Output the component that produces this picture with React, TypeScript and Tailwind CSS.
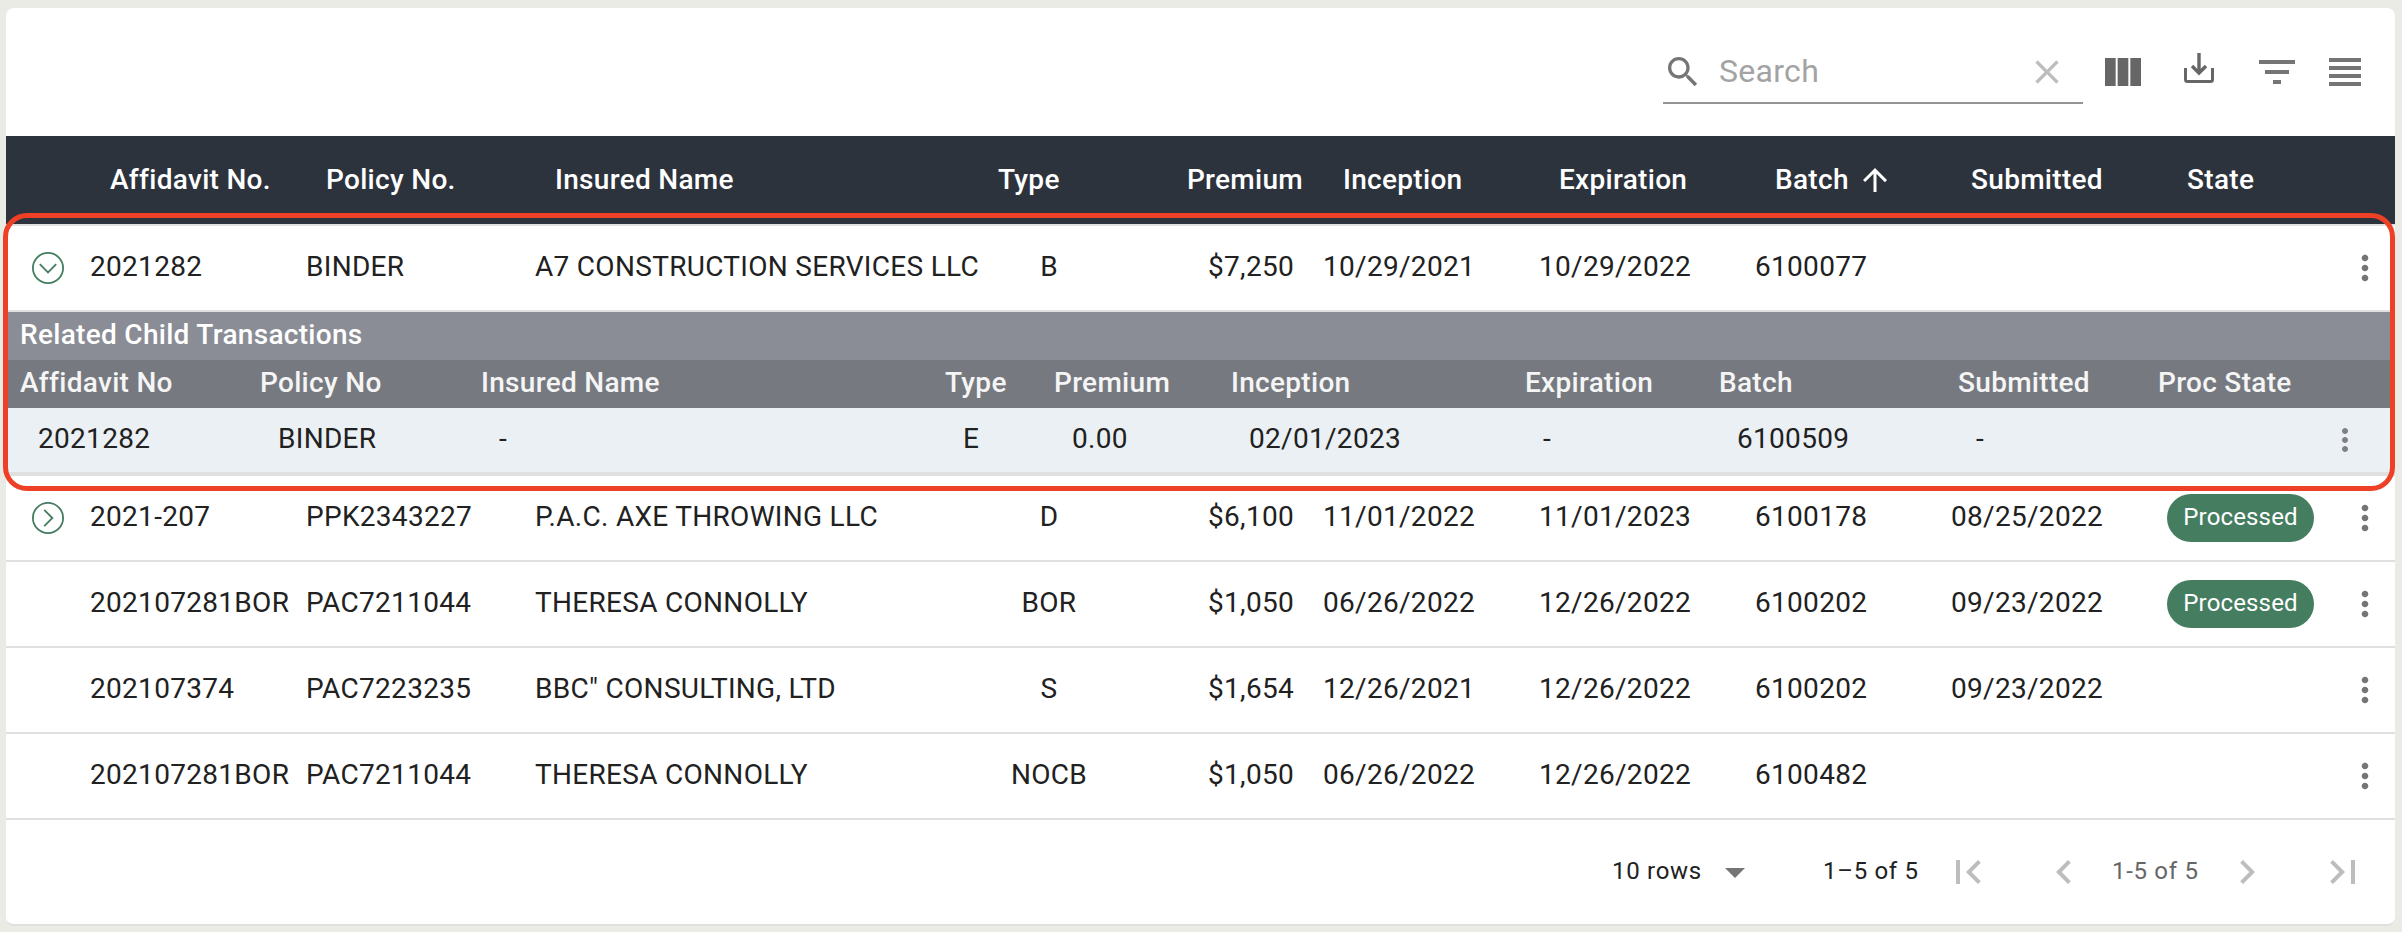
import React from "react";

type IconProps = { d: string; className: string };
const Icon = ({ d, className }: IconProps) => (
  <svg viewBox="0 0 24 24" fill="currentColor" className={`shrink-0 ${className}`}>
    <path d={d} />
  </svg>
);

const SEARCH =
  "M15.5 14h-.79l-.28-.27C15.41 12.59 16 11.11 16 9.5 16 5.91 13.09 3 9.5 3S3 5.91 3 9.5 5.91 16 9.5 16c1.61 0 3.09-.59 4.23-1.57l.27.28v.79l5 4.99L20.49 19l-4.99-5zm-6 0C7.01 14 5 11.99 5 9.5S7.01 5 9.5 5 14 7.01 14 9.5 11.99 14 9.5 14z";
const CLEAR =
  "M19 6.41L17.59 5 12 10.59 6.41 5 5 6.41 10.59 12 5 17.59 6.41 19 12 13.41 17.59 19 19 17.59 13.41 12z";
const COLUMNS = "M14.67 5v14H9.33V5h5.34zm1 14H21V5h-5.33v14zm-7.34 0V5H3v14h5.33z";
const FILTER = "M10 18h4v-2h-4v2zM3 6v2h18V6H3zm3 7h12v-2H6v2z";
const HEADLINE = "M4 15h16v-2H4v2zm0 4h16v-2H4v2zm0-8h16V9H4v2zm0-6v2h16V5H4z";
const MORE =
  "M12 8c1.1 0 2-.9 2-2s-.9-2-2-2-2 .9-2 2 .9 2 2 2zm0 2c-1.1 0-2 .9-2 2s.9 2 2 2 2-.9 2-2-.9-2-2-2zm0 6c-1.1 0-2 .9-2 2s.9 2 2 2 2-.9 2-2-.9-2-2-2z";
const ARROW_UP = "M4 12l1.41 1.41L11 7.83V20h2V7.83l5.58 5.59L20 12l-8-8-8 8z";
const DROP = "M7 10l5 5 5-5z";
const FIRST = "M18.41 16.59L13.82 12l4.59-4.59L17 6l-6 6 6 6zM6 6h2v12H6z";
const LAST = "M5.59 7.41L10.18 12l-4.59 4.59L7 18l6-6-6-6zM16 6h2v12h-2z";
const LEFT = "M15.41 7.41L14 6l-6 6 6 6 1.41-1.41L10.83 12z";
const RIGHT = "M10 6L8.59 7.41 13.17 12l-4.58 4.59L10 18l6-6z";

const Download = () => (
  <svg viewBox="0 0 30 30" fill="none" stroke="#666" strokeWidth="3" className="ml-[37px] mt-[45px] h-[30px] w-[30px] shrink-0">
    <path d="M1.5 15v11.5q0 2 2 2h23q2 0 2-2V15" />
    <path d="M15 0v20M8 13l7 7 7-7" strokeWidth="3.4" />
  </svg>
);

const Toggle = ({ open }: { open: boolean }) => (
  <svg viewBox="0 0 32 32" fill="none" stroke="#457d60" strokeWidth="1.8" className="h-8 w-8">
    <circle cx="16" cy="16" r="15.1" />
    <path d={open ? "M7.8 12.2l8.2 8.2 8.2-8.2" : "M12.2 7.8l8.2 8.2-8.2 8.2"} />
  </svg>
);

const COLS =
  "grid grid-cols-[84px_216px_229px_453px_122px_184px_216px_216px_196px_216px_1fr] items-center";
const CHILD_COLS =
  "grid grid-cols-[240px_221px_464px_109px_177px_294px_194px_239px_200px_1fr] items-center pl-[14px]";

type Row = {
  toggle?: "open" | "closed";
  cells: string[];
  processed?: boolean;
};

const parent: Row = {
  toggle: "open",
  cells: ["2021282", "BINDER", "A7 CONSTRUCTION SERVICES LLC", "B", "$7,250", "10/29/2021", "10/29/2022", "6100077", ""],
};

const rows: Row[] = [
  {
    toggle: "closed",
    cells: ["2021-207", "PPK2343227", "P.A.C. AXE THROWING LLC", "D", "$6,100", "11/01/2022", "11/01/2023", "6100178", "08/25/2022"],
    processed: true,
  },
  {
    cells: ["202107281BOR", "PAC7211044", "THERESA CONNOLLY", "BOR", "$1,050", "06/26/2022", "12/26/2022", "6100202", "09/23/2022"],
    processed: true,
  },
  {
    cells: ["202107374", "PAC7223235", "BBC\" CONSULTING, LTD", "S", "$1,654", "12/26/2021", "12/26/2022", "6100202", "09/23/2022"],
  },
  {
    cells: ["202107281BOR", "PAC7211044", "THERESA CONNOLLY", "NOCB", "$1,050", "06/26/2022", "12/26/2022", "6100482", ""],
  },
];

const childHeads = ["Affidavit No", "Policy No", "Insured Name", "Type", "Premium", "Inception", "Expiration", "Batch", "Submitted", "Proc State"];
const childCells = ["2021282", "BINDER", "-", "E", "0.00", "02/01/2023", "-", "6100509", "-"];

const cellClass = (i: number) => {
  if (i === 3) return "pb-[2px] text-center";
  if (i === 4) return "pb-[2px] text-right";
  if (i > 4) return "pb-[2px] pl-[29px]";
  return "pb-[2px]";
};

const TableRow = ({ row }: { row: Row }) => (
  <div className={`${COLS} h-[86px] shrink-0 border-b-2 border-[#e0e0e0]`}>
    <div className="pl-[26px]">{row.toggle && <Toggle open={row.toggle === "open"} />}</div>
    {row.cells.map((c, i) => (
      <div key={i} className={cellClass(i)}>
        {c}
      </div>
    ))}
    <div className="flex items-center justify-between pl-[29px] pr-[10px]">
      {row.processed ? (
        <span className="flex h-12 w-[147px] items-center justify-center rounded-[24px] bg-[#457d60] pb-[2px] text-[24px] tracking-[0.15px] text-white">
          Processed
        </span>
      ) : (
        <span />
      )}
      <Icon d={MORE} className="h-10 w-10 text-[#757575]" />
    </div>
  </div>
);

export default function App() {
  return (
    <div className="h-[932px] w-[2402px] overflow-hidden bg-[#ebebe5] pl-[6px] pt-2 font-['Roboto',sans-serif] text-[28px] leading-[40px] tracking-[0.3px] whitespace-nowrap text-[#212121]">
      <div className="relative flex h-[918px] w-[2389px] flex-col rounded-lg border-b-2 border-[#e0e0e0] bg-white">
        <div className="flex h-32 shrink-0 items-start">
          <div className="ml-[1657px] mt-[34px] flex h-[62px] w-[420px] items-center border-b-2 border-[#949494] text-[#757575]">
            <Icon d={SEARCH} className="h-10 w-10" />
            <span className="ml-4 flex-1 pb-[2px] text-[32px] text-[#a3a3a3]">Search</span>
            <Icon d={CLEAR} className="mr-4 h-10 w-10 text-[#bdbdbd]" />
          </div>
          <Icon d={COLUMNS} className="ml-4 mt-10 h-12 w-12 text-[#666]" />
          <Download />
          <Icon d={FILTER} className="ml-[39px] mt-10 h-12 w-12 text-[#757575]" />
          <Icon d={HEADLINE} className="ml-5 mt-10 h-12 w-12 text-[#757575]" />
        </div>

        <div className={`${COLS} h-[90px] shrink-0 border-b-2 border-[#e0e0e0] bg-[#2d333d] pb-px font-medium text-white`}>
          <div />
          <div className="pl-[20px]">Affidavit No.</div>
          <div className="pl-[20px]">Policy No.</div>
          <div className="pl-[20px]">Insured Name</div>
          <div className="pl-[10px]">Type</div>
          <div className="-mr-[9px] text-right">Premium</div>
          <div className="pl-[49px]">Inception</div>
          <div className="pl-[49px]">Expiration</div>
          <div className="flex items-center pl-[49px]">
            Batch
            <Icon d={ARROW_UP} className="ml-2 mt-px h-9 w-9" />
          </div>
          <div className="pl-[49px]">Submitted</div>
          <div className="pl-[49px]">State</div>
        </div>

        <TableRow row={parent} />
        <div className="flex h-12 shrink-0 items-center bg-[#8a8d95] pb-[2px] pl-[14px] font-medium text-white">
          Related Child Transactions
        </div>
        <div className={`${CHILD_COLS} h-12 shrink-0 bg-[#767a80] pb-[2px] font-medium text-[#f5f5f5]`}>
          {childHeads.map((h) => (
            <div key={h}>{h}</div>
          ))}
        </div>
        <div className={`${CHILD_COLS} h-[68px] shrink-0 border-b-4 border-[#e0e0e0] bg-[#ebf0f4]`}>
          {childCells.map((c, i) => (
            <div key={i} className="pb-[2px] pl-[18px]">
              {c}
            </div>
          ))}
          <div className="flex justify-end pr-[32px]">
            <Icon d={MORE} className="h-9 w-9 text-[#808080]" />
          </div>
        </div>
        {rows.map((r, i) => (
          <TableRow key={i} row={r} />
        ))}

        <div className="flex flex-1 items-center text-[24px] tracking-[0.7px]">
          <span className="ml-[1606px] w-[99px] pb-[2px]">10 rows</span>
          <Icon d={DROP} className="h-12 w-12 text-[#757575]" />
          <span className="ml-16 w-[115px] pb-[2px]">1–5 of 5</span>
          <Icon d={FIRST} className="ml-[6px] h-12 w-12 text-[#bdbdbd]" />
          <Icon d={LEFT} className="ml-12 h-12 w-12 text-[#bdbdbd]" />
          <span className="ml-6 w-[111px] pb-[2px] text-[#666]">1-5 of 5</span>
          <Icon d={RIGHT} className="h-12 w-12 text-[#bdbdbd]" />
          <Icon d={LAST} className="ml-12 h-12 w-12 text-[#bdbdbd]" />
        </div>

        <div className="pointer-events-none absolute -left-[3px] top-[205px] h-[278px] w-[2392px] rounded-[24px] border-[5px] border-[#ee4026]" />
      </div>
    </div>
  );
}
